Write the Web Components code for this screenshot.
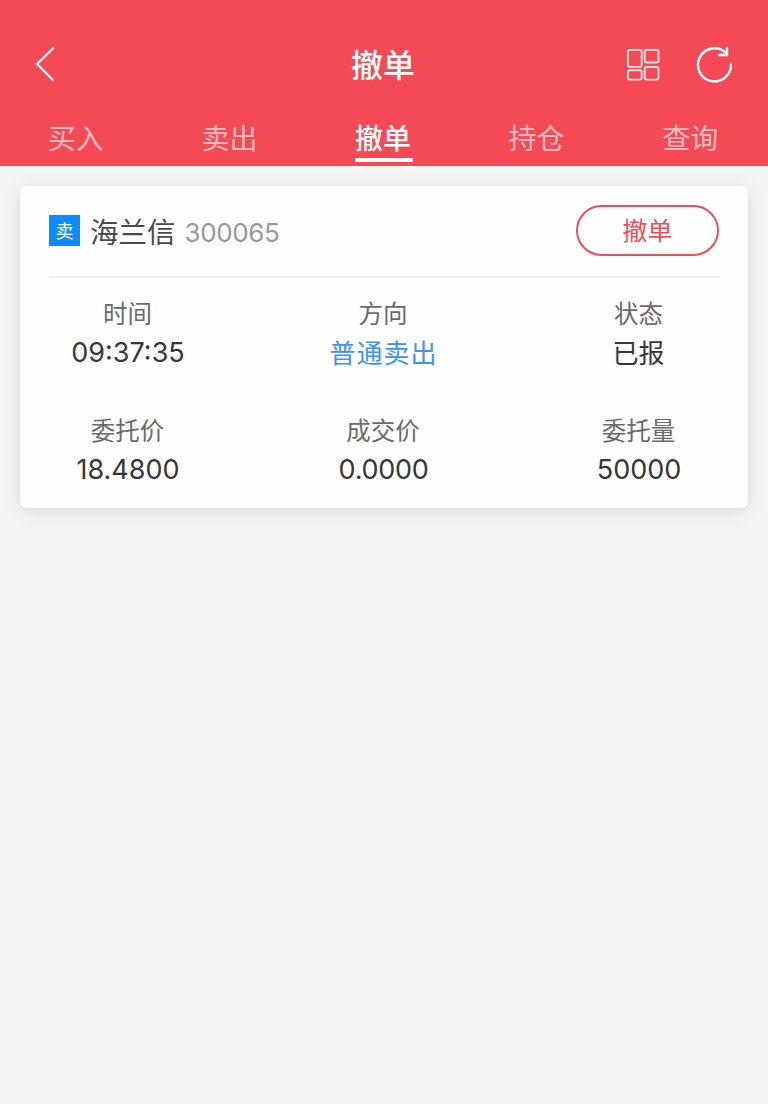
<!DOCTYPE html>
<html lang="zh-CN">
<head>
<meta charset="utf-8">
<meta name="viewport" content="width=device-width, initial-scale=1">
<title>撤单</title>
<style>
    body{
        margin: 0;
        min-height: 100vh;
        background-color: #f5f5f5;
        font-family: Inter, "Noto Sans CJK SC", sans-serif;
    }
</style>
</head>
<body>
<trade-page>
    <trade-header slot="header" data-title="撤单">
        <trade-tab>买入</trade-tab>
        <trade-tab>卖出</trade-tab>
        <trade-tab active>撤单</trade-tab>
        <trade-tab>持仓</trade-tab>
        <trade-tab>查询</trade-tab>
    </trade-header>
    <order-card data-side="卖" data-name="海兰信" data-code="300065">
        <order-field data-label="时间">09:37:35</order-field>
        <order-field data-label="方向" class="sell">普通卖出</order-field>
        <order-field data-label="状态" class="cjk">已报</order-field>
        <order-field data-label="委托价">18.4800</order-field>
        <order-field data-label="成交价" class="tight">0.0000</order-field>
        <order-field data-label="委托量">50000</order-field>
    </order-card>
</trade-page>

<script>
const makeTemplate = (html) => {
    const template = document.createElement("template");
    template.innerHTML = html;
    return template;
};

const pageTemplate = makeTemplate(`
<style>
    :host{
        display: flex;
        flex-direction: column;
        min-height: 100vh;
    }
    main{
        padding: 20px;
    }
</style>
<slot name="header"></slot>
<main><slot></slot></main>
`);

class TradePage extends HTMLElement{
    constructor(){
        super();
        this.attachShadow({mode: "open"});
        this.shadowRoot.appendChild(pageTemplate.content.cloneNode(true));
    }
}
customElements.define("trade-page", TradePage);

const headerTemplate = makeTemplate(`
<style>
    :host{
        display: flex;
        flex-direction: column;
        box-sizing: border-box;
        height: 166px;
        padding-top: 36px;
        background-color: #f34a56;
        color: #fff;
    }
    .bar{
        display: grid;
        grid-template-columns: 1fr auto 1fr;
        align-items: center;
        height: 56px;
        padding: 0 36px 0 34px;
    }
    h1{
        margin: 0;
        padding-top: 4px;
        font-size: 32px;
        font-weight: 500;
        line-height: 52px;
    }
    .actions{
        display: flex;
        justify-content: flex-end;
        align-items: center;
        gap: 36px;
    }
    svg{
        display: block;
        fill: none;
        stroke: currentColor;
    }
    nav{
        display: grid;
        grid-template-columns: repeat(5, 1fr);
        margin-top: 20px;
    }
</style>
<div class="bar">
    <svg width="21" height="36" viewBox="-1 0 21 36" stroke-width="2.200" stroke-linecap="round" stroke-linejoin="round">
        <path d="M18.200 2.200 2 18l15.700 15.800"/>
    </svg>
    <h1></h1>
    <div class="actions">
        <svg width="34" height="34" viewBox="0 0 34 34" stroke-width="1.900" opacity=".85">
            <rect x="1.900" y="2.900" width="13.800" height="17" rx="2"/>
            <rect x="18.700" y="2.900" width="13.800" height="12.600" rx="2"/>
            <rect x="1.900" y="23.300" width="13.800" height="9.300" rx="2"/>
            <rect x="18.700" y="20" width="13.800" height="12.600" rx="2"/>
        </svg>
        <svg width="36" height="38" viewBox="0 0 36 38" stroke-width="2.400" stroke-linecap="round">
            <path d="M35 19.500A16.500 16.500 0 1 1 30 8"/>
            <path d="M31 3v7H23"/>
        </svg>
    </div>
</div>
<nav><slot></slot></nav>
`);

class TradeHeader extends HTMLElement{
    constructor(){
        super();
        this.attachShadow({mode: "open"});
        this.shadowRoot.appendChild(headerTemplate.content.cloneNode(true));
        this.h1 = this.shadowRoot.querySelector("h1");
    }
    connectedCallback(){
        this.h1.textContent = this.getAttribute("data-title") || "";
    }
}
customElements.define("trade-header", TradeHeader);

const tabTemplate = makeTemplate(`
<style>
    :host{
        display: flex;
        justify-content: center;
        color: rgba(255, 255, 255, .65);
        font-size: 28px;
        line-height: 38px;
    }
    span{
        box-sizing: border-box;
        height: 50px;
        padding: 8px 2px 0 0;
        border-bottom: 4px solid transparent;
    }
    :host([active]){
        color: #fff;
        font-weight: 500;
    }
    :host([active]) span{
        border-color: #fff;
    }
</style>
<span><slot></slot></span>
`);

class TradeTab extends HTMLElement{
    constructor(){
        super();
        this.attachShadow({mode: "open"});
        this.shadowRoot.appendChild(tabTemplate.content.cloneNode(true));
    }
}
customElements.define("trade-tab", TradeTab);

const cardTemplate = makeTemplate(`
<style>
    :host{
        display: block;
        box-sizing: border-box;
        height: 322px;
        padding: 0 28px 0 29px;
        border-radius: 7px;
        background-color: #fefefe;
        box-shadow: 0 4px 20px rgba(0, 0, 0, .11);
    }
    header{
        display: flex;
        align-items: center;
        box-sizing: border-box;
        height: 92px;
        padding-bottom: 1px;
        border-bottom: 2px solid #f0f0f0;
    }
    .side{
        width: 31px;
        height: 31px;
        background-color: #0a8cff;
        color: #fff;
        font-size: 18px;
        line-height: 33px;
        text-align: center;
    }
    .name{
        margin-left: 10px;
        padding-top: 5px;
        color: #4a4a4a;
        font-size: 28.500px;
        line-height: 40px;
    }
    .code{
        margin-left: 9px;
        padding-top: 5px;
        color: #999;
        font-size: 26px;
        letter-spacing: -.4px;
        line-height: 40px;
    }
    button{
        box-sizing: border-box;
        width: 143px;
        height: 51px;
        margin: 0 1px 0 auto;
        padding: 1px 0 0;
        border: 2px solid #ee4e5a;
        border-radius: 26px;
        background: none;
        color: #ee4e5a;
        font: 25px/46px Inter, "Noto Sans CJK SC", sans-serif;
    }
    .fields{
        display: grid;
        grid-template-columns: repeat(3, 158px);
        justify-content: space-between;
        row-gap: 37px;
        padding: 16px 2px 0 0;
    }
</style>
<header>
    <span class="side"></span>
    <span class="name"></span>
    <span class="code"></span>
    <button type="button">撤单</button>
</header>
<div class="fields"><slot></slot></div>
`);

class OrderCard extends HTMLElement{
    constructor(){
        super();
        this.attachShadow({mode: "open"});
        this.shadowRoot.appendChild(cardTemplate.content.cloneNode(true));
        this.side = this.shadowRoot.querySelector(".side");
        this.stock = this.shadowRoot.querySelector(".name");
        this.code = this.shadowRoot.querySelector(".code");
        this.button = this.shadowRoot.querySelector("button");
    }
    connectedCallback(){
        this.button.onclick = () => this.remove();
        this.render();
    }
    disconnectedCallback(){
        this.button.onclick = null;
    }
    render(){
        this.side.textContent = this.getAttribute("data-side");
        this.stock.textContent = this.getAttribute("data-name");
        this.code.textContent = this.getAttribute("data-code");
    }
}
customElements.define("order-card", OrderCard);

const fieldTemplate = makeTemplate(`
<style>
    :host{
        display: flex;
        flex-direction: column;
        align-items: center;
        white-space: nowrap;
    }
    .label{
        padding-right: 1px;
        color: #6a6a6a;
        font-size: 24.500px;
        line-height: 40px;
    }
    .value{
        color: #363636;
        font-size: 27px;
        line-height: 38px;
        height: 40px;
    }
    :host(.cjk) .value, :host(.sell) .value{
        font-size: 26px;
        line-height: 40px;
    }
    :host(.cjk) .value{
        padding-right: 1px;
    }
    :host(.tight) .value{
        letter-spacing: -.3px;
    }
    :host(.sell) .value{
        color: #3f92f5;
        letter-spacing: 1px;
    }
</style>
<span class="label"></span>
<span class="value"><slot></slot></span>
`);

class OrderField extends HTMLElement{
    constructor(){
        super();
        this.attachShadow({mode: "open"});
        this.shadowRoot.appendChild(fieldTemplate.content.cloneNode(true));
        this.label = this.shadowRoot.querySelector(".label");
    }
    connectedCallback(){
        this.label.textContent = this.getAttribute("data-label");
    }
}
customElements.define("order-field", OrderField);
</script>
</body>
</html>
